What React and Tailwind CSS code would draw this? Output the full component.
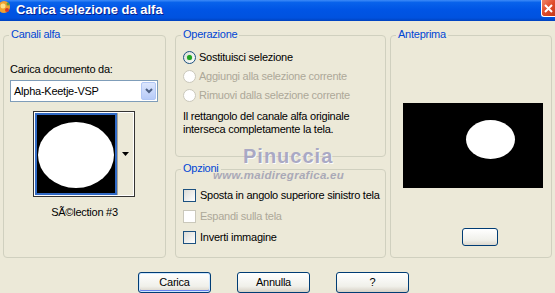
import React from 'react';

const Group = ({ label, className, children }) => {
  return (
    <div className={`border border-[#D0D0BF] rounded-[4px] ${className}`}>
      <div className="-mt-[8px] ml-[5px] px-[2px] w-fit bg-[#ECE9D8] text-[#0046D5] leading-[13px]">
        {label}
      </div>
      {children}
    </div>
  );
};

const Radio = ({ checked, disabled, children }) => {
  return (
    <div className="h-[19px] flex items-center pl-[7px]">
      <span
        className={`w-[13px] h-[13px] rounded-full border flex items-center justify-center ${
          disabled
            ? 'border-[#CAC8BB] bg-white'
            : 'border-[#1C5180] bg-[linear-gradient(135deg,#DCDCD7,#FFFFFF)]'
        }`}
      >
        {checked && <span className="w-[5px] h-[5px] rounded-full bg-[#21A121] shadow-[0_0_1px_#5CD65C]" />}
      </span>
      <span className={`ml-[3px] ${disabled ? 'text-[#ACA899]' : ''}`}>{children}</span>
    </div>
  );
};

const Check = ({ disabled, children }) => {
  return (
    <div className="h-[21px] flex items-center pl-[7px]">
      <span
        className={`w-[13px] h-[13px] border ${
          disabled
            ? 'border-[#CAC8BB] bg-white'
            : 'border-[#1C5180] bg-[linear-gradient(135deg,#DCDCD7,#FFFFFF)]'
        }`}
      />
      <span className={`ml-[4px] ${disabled ? 'text-[#ACA899]' : ''}`}>{children}</span>
    </div>
  );
};

const Button = ({ children, isDefault }) => {
  return (
    <button
      className={`w-[73px] h-[21px] rounded-[3px] border border-[#003C74] bg-[linear-gradient(to_bottom,#FFFFFF,#F0F0EA_70%,#D6D0C5)] leading-none ${
        isDefault ? 'shadow-[inset_0_0_0_1px_#CEE7FF,inset_0_-1px_0_1px_#6982EE]' : ''
      }`}
    >
      {children}
    </button>
  );
};

const TitleBar = () => {
  return (
    <div className="h-[21px] flex items-center bg-[linear-gradient(to_bottom,#3D8BF8_0%,#0862EB_12%,#0055E5_45%,#0052DF_85%,#0042BE_100%)] shrink-0">
      <svg width="12" height="14" viewBox="0 0 12 14" className="mb-[5px]">
        <circle cx="4" cy="6" r="6" fill="#F0A030" />
        <circle cx="3" cy="5" r="2.5" fill="#FBE08A" />
        <circle cx="7" cy="9" r="2" fill="#D83A2A" />
        <circle cx="8" cy="3" r="1.5" fill="#5A9E3A" />
      </svg>
      <span className="ml-[4px] text-white font-bold text-[13px] tracking-normal leading-none mb-[3px] [text-shadow:1px_1px_0_#0A1E8C]">
        Carica selezione da alfa
      </span>
      <div className="ml-auto mb-[4px] w-[14px] h-[17px] rounded-bl-[3px] border-l border-b border-white bg-[linear-gradient(135deg,#F0866A,#E04A2A_50%,#C43A1A)] flex items-center justify-center">
        <svg width="9" height="9" viewBox="0 0 9 9">
          <path d="M1 1 L8 8 M8 1 L1 8" stroke="white" strokeWidth="2" />
        </svg>
      </div>
    </div>
  );
};

export default function App() {
  return (
    <div className="relative w-[555px] h-[293px] bg-[#ECE9D8] overflow-hidden flex flex-col font-['Liberation_Sans',Arial,sans-serif] text-[11px] text-black tracking-[-0.25px]">
      <TitleBar />

      <div className="flex pl-[3px] pt-[14px]">
        {/* Canali alfa */}
        <Group label="Canali alfa" className="w-[163px] h-[223px] flex flex-col">
          <div className="ml-[6px] mt-[22px] leading-[13px]">Carica documento da:</div>
          <div className="ml-[6px] mt-[4px] w-[148px] h-[22px] border border-[#7F9DB9] bg-white flex items-center">
            <span className="ml-[3px]">Alpha-Keetje-VSP</span>
            <span className="ml-auto mr-[1px] w-[15px] h-[18px] rounded-[2px] border border-[#B1C7F5] bg-[linear-gradient(to_bottom,#DCE6FD,#B7CBF8)] flex items-center justify-center">
              <svg width="8" height="6" viewBox="0 0 8 6">
                <path d="M1 1 L4 4 L7 1" stroke="#4D6185" strokeWidth="2" fill="none" />
              </svg>
            </span>
          </div>
          <div className="ml-[29px] mt-[9px] w-[102px] h-[86px] border border-[#333] bg-white flex p-[1px]">
            <div className="w-[82px] h-[82px] border-2 border-[#316AC5] bg-black">
              <svg width="78" height="78" viewBox="0 0 78 78">
                <ellipse cx="39" cy="40" rx="38" ry="33" fill="white" />
              </svg>
            </div>
            <div className="flex-1 bg-[#ECE9D8] border-l border-[#ACA899] flex items-center justify-center">
              <svg width="7" height="4" viewBox="0 0 7 4">
                <path d="M0 0 L7 0 L3.5 4 Z" fill="black" />
              </svg>
            </div>
          </div>
          <div className="mt-[9px] leading-[13px] text-center">SÃ©lection #3</div>
        </Group>

        {/* Operazione / Opzioni */}
        <div className="ml-[9px] w-[211px] flex flex-col">
          <Group label="Operazione" className="h-[122px]">
            <div className="mt-[7px]">
              <Radio checked>Sostituisci selezione</Radio>
              <Radio disabled>Aggiungi alla selezione corrente</Radio>
              <Radio disabled>Rimuovi dalla selezione corrente</Radio>
            </div>
            <div className="ml-[7px] mt-[5px] leading-[13px]">
              Il rettangolo del canale alfa originale
              <br />
              interseca completamente la tela.
            </div>
          </Group>
          <Group label="Opzioni" className="mt-[12px] h-[89px]">
            <div className="mt-[10px]">
              <Check>Sposta in angolo superiore sinistro tela</Check>
              <Check disabled>Espandi sulla tela</Check>
              <Check>Inverti immagine</Check>
            </div>
          </Group>
        </div>

        {/* Anteprima */}
        <Group label="Anteprima" className="ml-[4px] w-[162px] h-[223px]">
          <svg width="140" height="85" viewBox="0 0 140 85" className="ml-[12px] mt-[62px] block">
            <rect width="140" height="85" fill="black" />
            <ellipse cx="87.5" cy="36.5" rx="24.5" ry="19.5" fill="white" />
          </svg>
          <div className="ml-[71px] mt-[40px] w-[36px] h-[18px] rounded-[3px] border border-[#003C74] bg-[linear-gradient(to_bottom,#FFFFFF,#F0F0EA_70%,#DCD7CD)]" />
        </Group>
      </div>

      <div className="flex pl-[138px] gap-[26px] mt-[14px]">
        <Button isDefault>Carica</Button>
        <Button>Annulla</Button>
        <Button>?</Button>
      </div>

      {/* watermark */}
      <div className="absolute left-[243px] top-[146px] text-[20px] font-bold tracking-[1px] text-[#A3A3C2] opacity-90 leading-none [text-shadow:1px_1px_0_#ffffff]">
        Pinuccia
      </div>
      <div className="absolute left-[213px] top-[170px] text-[11.5px] font-bold italic tracking-[0.3px] text-[#9A9AB0] opacity-80 leading-none">
        www.maidiregrafica.eu
      </div>
    </div>
  );
}
